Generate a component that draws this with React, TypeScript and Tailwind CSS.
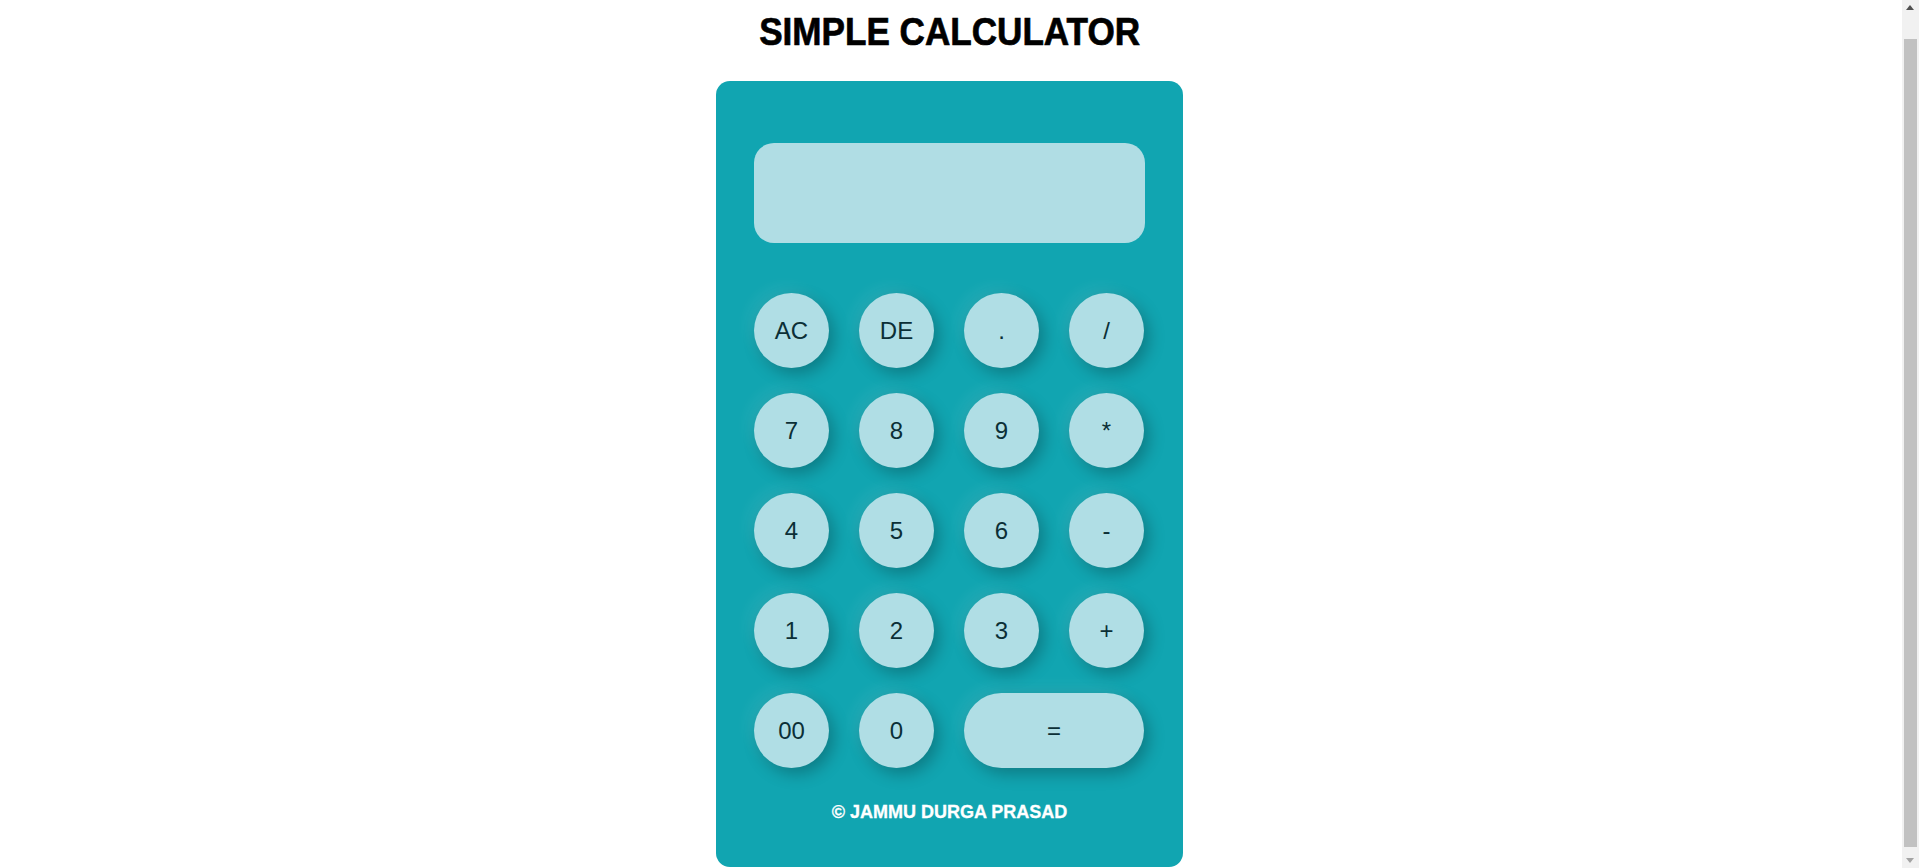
import React from "react"

const KEYS = [
  "AC", "DE", ".", "/",
  "7", "8", "9", "*",
  "4", "5", "6", "-",
  "1", "2", "3", "+",
  "00", "0",
]

function Key({ label, wide }: { label: string; wide?: boolean }) {
  return (
    <button
      className={
        "h-[75px] rounded-full bg-[#b0dee5] text-[24px] text-[#0b2f36] font-['Liberation_Sans',Arial,sans-serif] " +
        "shadow-[5px_6px_16px_rgba(0,0,0,0.25),-6px_-6px_16px_rgba(255,255,255,0.08)] " +
        (wide ? "col-span-2 w-full" : "w-[75px]")
      }
    >
      {label}
    </button>
  )
}

// imitation of the browser's vertical scrollbar seen in the screenshot
function FakeScrollbar() {
  return (
    <div className="fixed right-0 top-0 h-screen w-[17px] bg-[#f1f1f1]" aria-hidden>
      <div className="absolute left-[4px] top-[5px] w-0 h-0 border-x-[4.5px] border-x-transparent border-b-[5px] border-b-[#505050]" />
      <div className="absolute left-[2px] right-[2px] top-[39px] h-[808px] bg-[#c1c1c1]" />
      <div className="absolute left-[4px] bottom-[5px] w-0 h-0 border-x-[4.5px] border-x-transparent border-t-[5px] border-t-[#a3a3a3]" />
    </div>
  )
}

export default function App() {
  return (
    <div className="min-h-screen bg-white flex flex-col items-center pr-[20px] pb-[30px]">
      <h1 className="mt-2 text-[39px] leading-[48px] font-bold text-black font-['Liberation_Sans',Arial,sans-serif] inline-block scale-x-[0.9] [-webkit-text-stroke:0.7px_black]">
        SIMPLE CALCULATOR
      </h1>

      <div className="mt-[25px] w-[467px] rounded-[14px] bg-[#11a5b1] px-[38px] pt-[62px] pb-[44px] flex flex-col">
        {/* display */}
        <div className="h-[100px] w-[391px] rounded-[20px] bg-[#b0dde4]" />

        {/* keypad */}
        <div className="mt-[50px] grid grid-cols-[repeat(4,75px)] gap-x-[30px] gap-y-[25px]">
          {KEYS.map((k) => (
            <Key key={k} label={k} />
          ))}
          <Key label="=" wide />
        </div>

        <p className="mt-[33px] text-center text-[18px] leading-[22px] font-bold text-white font-['Liberation_Sans',Arial,sans-serif] [-webkit-text-stroke:0.3px_white]">
          © JAMMU DURGA PRASAD
        </p>
      </div>

      <FakeScrollbar />
    </div>
  )
}
